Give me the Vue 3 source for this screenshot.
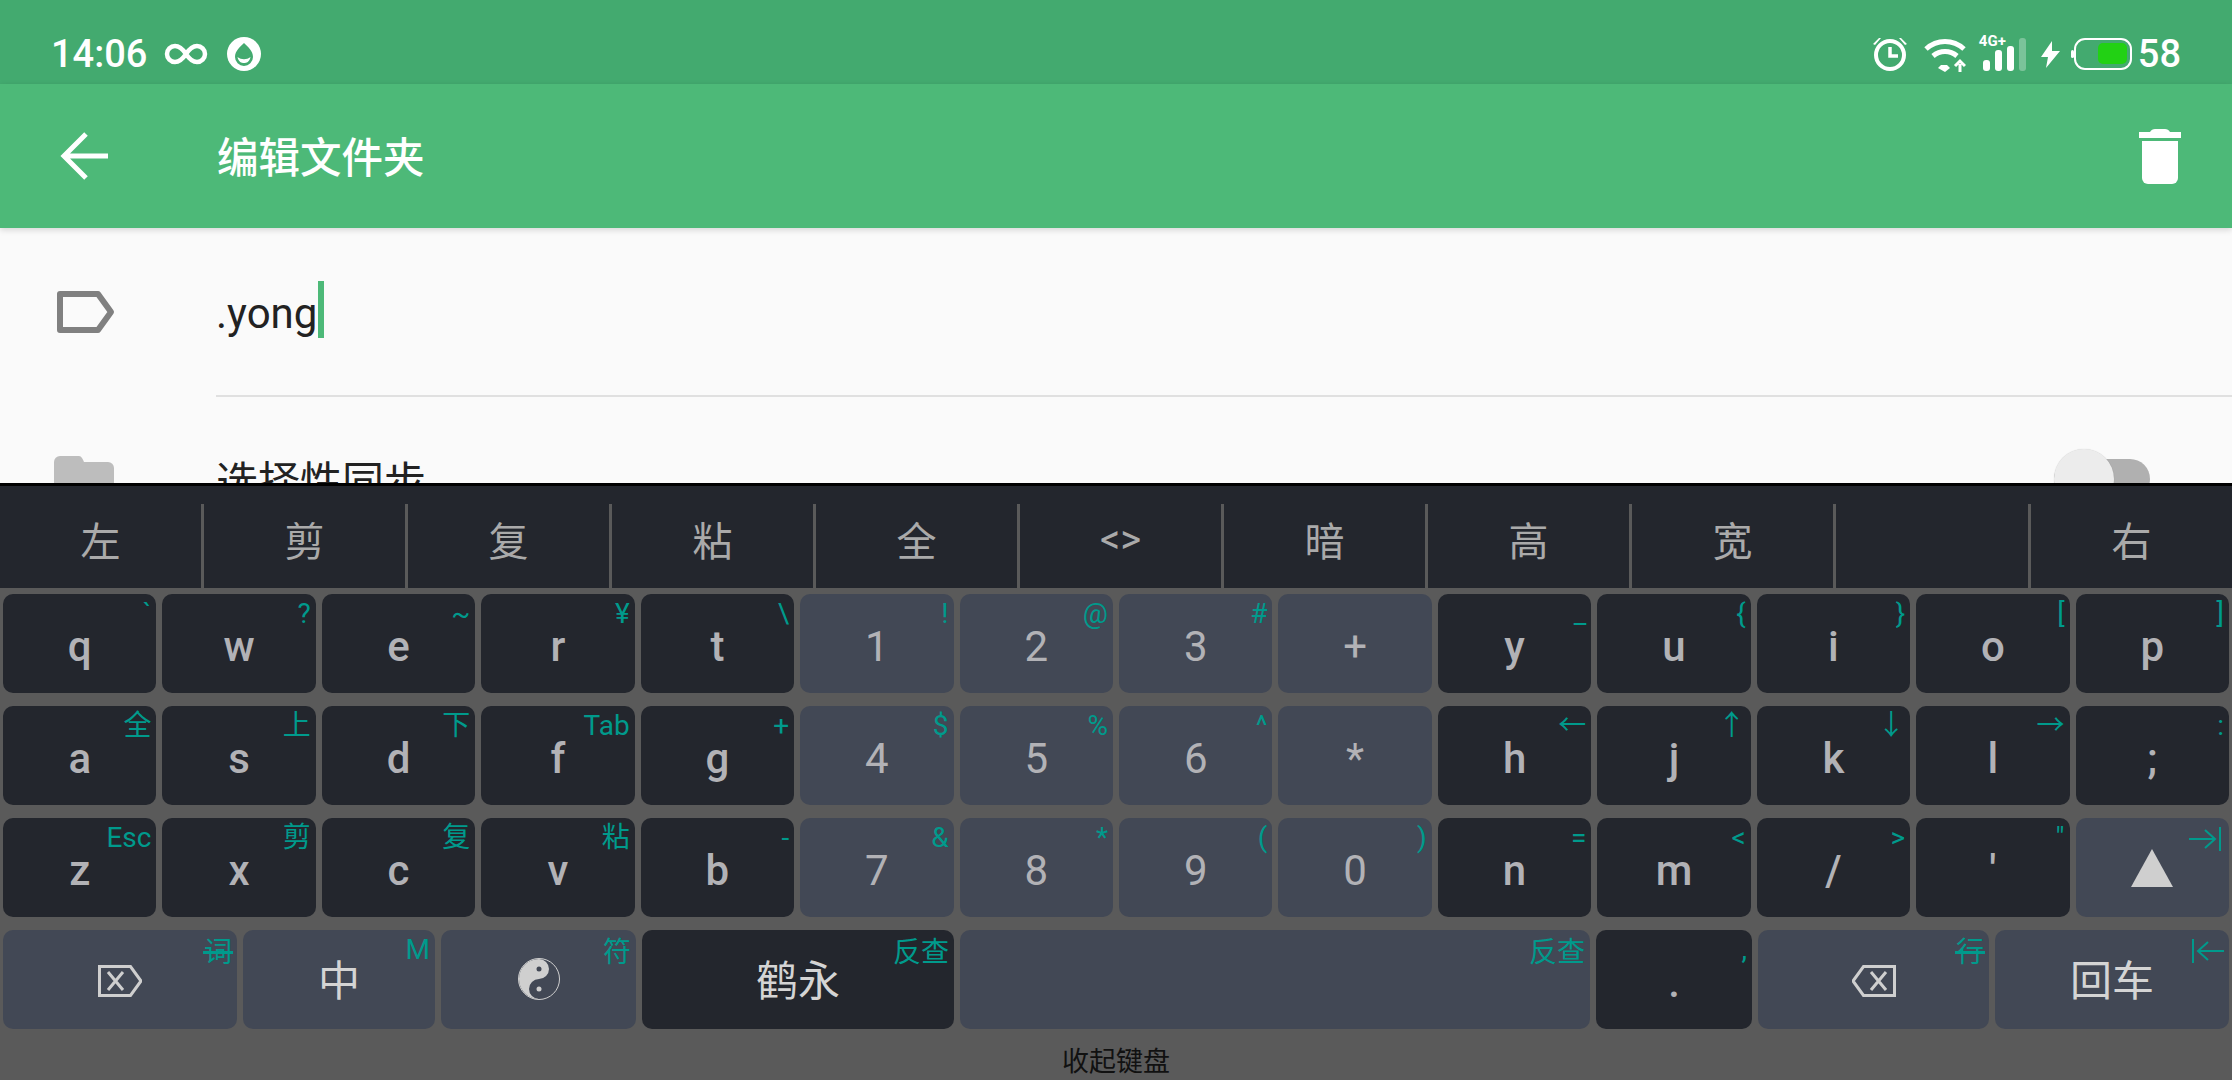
<!-- App.vue -->
<!-- Edit folder screen with a dark soft keyboard open over it. -->

<script setup>
const candidates = ['左', '剪', '复', '粘', '全', '<>', '暗', '高', '宽', '', '右']

function makeRow(labels, hints, liteFrom, liteTo) {
  return labels.map((label, i) => ({
    label,
    hint: hints[i],
    lite: i >= liteFrom && i <= liteTo,
  }))
}

const rows = [
  makeRow(
    ['q', 'w', 'e', 'r', 't', '1', '2', '3', '+', 'y', 'u', 'i', 'o', 'p'],
    ['`', '?', '~', '¥', '\\', '!', '@', '#', '', '_', '{', '}', '[', ']'],
    5, 8,
  ),
  makeRow(
    ['a', 's', 'd', 'f', 'g', '4', '5', '6', '*', 'h', 'j', 'k', 'l', ';'],
    ['全', '上', '下', 'Tab', '+', '$', '%', '^', '', '←', '↑', '↓', '→', ':'],
    5, 8,
  ),
  makeRow(
    ['z', 'x', 'c', 'v', 'b', '7', '8', '9', '0', 'n', 'm', '/', "'", ''],
    ['Esc', '剪', '复', '粘', '-', '&', '*', '(', ')', '=', '<', '>', '"', ''],
    5, 8,
  ),
]
rows[2][13].lite = true
rows[2][13].shift = true
</script>

<template>
  <div class="screen">
    <div class="status">
      <div class="status-left">
        <span class="status-text">14:06</span>
        <svg class="ic-inf" width="44" height="22" viewBox="0 0 44 22" fill="none" stroke="#fff" stroke-width="4.500">
          <path d="M22 11C18 5 15 3 11 3a8 8 0 0 0 0 16c4 0 7-2 11-8s7-8 11-8a8 8 0 0 1 0 16c-4 0-7-2-11-8z" />
        </svg>
        <svg class="ic-drop" width="34" height="34" viewBox="0 0 34 34">
          <circle cx="17" cy="17" r="17" fill="#fff" />
          <path d="M17 6c4 4 9 8 9 14a9 9 0 0 1-18 0c0-6 5-10 9-14z" fill="#43aa6f" />
          <path d="M10.500 20c4 3 9 3 13 0c-1 5-4 6-6.500 6s-5.500-1-6.500-6z" fill="#fff" />
        </svg>
      </div>
      <div class="status-right">
        <svg width="36" height="36" viewBox="0 0 36 36" fill="none" stroke="#fff">
          <circle cx="18" cy="19" r="14" stroke-width="4" />
          <path d="M18 11v9h8" stroke-width="3.500" />
          <path d="M1 8l6-6h2L3 9zM35 8l-6-6h-2l6 7z" fill="#fff" stroke="none" />
        </svg>
        <svg class="ic-wifi" width="42" height="34" viewBox="0 0 42 34" fill="none" stroke="#fff" stroke-width="5">
          <path d="M2 11c11-10 27-10 38 0" />
          <path d="M9 18c7-6 17-6 24 0" />
          <path d="M14 30l7 4 5-4-3-3h-6z" fill="#fff" stroke="none" />
          <path d="M36 34v-8M31 28l5-5 5 5" stroke-width="3" />
        </svg>
        <div class="signal">
          <span class="net">4G+</span>
          <svg width="46" height="33" viewBox="0 0 46 33">
            <rect x="0" y="22" width="7" height="11" rx="3" fill="#fff" />
            <rect x="12" y="12" width="7" height="21" rx="3" fill="#fff" />
            <rect x="24" y="8" width="7" height="25" rx="3" fill="#fff" />
            <rect x="36" y="0" width="7" height="33" rx="3" fill="#fff" opacity="0.3" />
          </svg>
        </div>
        <svg class="ic-bolt" width="19" height="27" viewBox="0 0 19 27">
          <path d="M11 0L0 16h7L5 27 19 10h-8z" fill="#fff" />
        </svg>
        <svg class="ic-batt" width="61" height="32" viewBox="0 0 61 32" fill="none">
          <rect x="4" y="1" width="56" height="30" rx="10" stroke="#fff" stroke-width="2" />
          <rect x="27" y="5" width="29" height="21" rx="5" fill="#22d114" />
          <rect x="0" y="12" width="3" height="8" rx="1.500" fill="#fff" />
        </svg>
        <span class="status-text">58</span>
      </div>
    </div>

    <div class="toolbar">
      <svg class="ic-back" width="48" height="48" viewBox="0 0 48 48" fill="none" stroke="#fff" stroke-width="5">
        <path d="M48 24H4M26 2L4 24l22 22" />
      </svg>
      <h1 class="title">编辑文件夹</h1>
      <svg class="ic-trash" width="42" height="55" viewBox="0 0 42 55" fill="#fff">
        <path d="M0 3h11c1-2 3-3 5-3h10c2 0 4 1 5 3h11v6H0z" />
        <path d="M3 12h36v37a6 6 0 0 1-6 6H9a6 6 0 0 1-6-6z" />
      </svg>
    </div>

    <div class="content">
      <div class="row row-name">
        <svg class="row-icon" width="60" height="44" viewBox="0 0 60 44" fill="none" stroke="#808080" stroke-width="6" stroke-linejoin="round">
          <path d="M4 4h38l13 18-13 18H4z" />
        </svg>
        <div class="field">
          <span class="field-text">.yong</span><span class="caret"></span>
        </div>
      </div>
      <div class="row row-sync">
        <svg class="row-icon" width="60" height="50" viewBox="0 0 60 50" fill="#bdbdbd">
          <path d="M6 0h18c3 0 4 1 6 6h24a6 6 0 0 1 6 6v38H0V6a6 6 0 0 1 6-6z" />
        </svg>
        <span class="sync-label">选择性同步</span>
        <div class="toggle"><span class="knob"></span></div>
      </div>
    </div>

    <div class="keyboard">
      <div class="candidates">
        <div v-for="(c, i) in candidates" :key="i" class="cand">
          <span :class="{ ascii: c === '<>' }">{{ c }}</span>
        </div>
      </div>

      <div class="keys">
        <div v-for="(row, r) in rows" :key="r" class="key-row">
          <div v-for="k in row" :key="k.label + k.hint" class="key" :class="{ lite: k.lite }">
            <span v-if="k.hint" class="hint">{{ k.hint }}</span>
            <svg v-if="k.shift" class="shift" width="42" height="38" viewBox="0 0 42 38">
              <path d="M21 0l21 38H0z" fill="#cfcfcf" />
            </svg>
            <span v-else class="label" :class="{ thin: k.lite }">{{ k.label }}</span>
          </div>
          <div v-if="r === 2" class="tab-hint">
            <svg width="32" height="24" viewBox="0 0 32 24" fill="none" stroke="#009a8c" stroke-width="2">
              <path d="M0 12h26M16 3l10 9-10 9M31 0v24" />
            </svg>
          </div>
        </div>

        <div class="key-row bottom">
          <div class="key lite">
            <span class="hint cjk strike">词</span>
            <svg class="del" width="44" height="32" viewBox="0 0 44 32" fill="none" stroke="#cfcfcf" stroke-width="3">
              <path d="M1.500 1.500h31L43 16 32.500 30.500h-31z" />
              <path d="M10 7l15 18M25 7L10 25" />
            </svg>
          </div>
          <div class="key lite">
            <span class="hint">M</span>
            <span class="label cjk">中</span>
          </div>
          <div class="key lite">
            <span class="hint cjk">符</span>
            <svg class="taiji" width="42" height="42" viewBox="0 0 42 42">
              <circle cx="21" cy="21" r="20.500" fill="none" stroke="#cfcfcf" stroke-width="1" />
              <path d="M21 1A20 20 0 0 0 21 41A10 10 0 0 1 21 21A10 10 0 0 0 21 1z" fill="#cfcfcf" />
              <circle cx="21" cy="11" r="2.500" fill="#424855" />
              <circle cx="21" cy="31" r="2.500" fill="#cfcfcf" />
            </svg>
          </div>
          <div class="key">
            <span class="hint cjk">反查</span>
            <span class="label cjk">鹤永</span>
          </div>
          <div class="key lite">
            <span class="hint cjk">反查</span>
          </div>
          <div class="key">
            <span class="hint">,</span>
            <span class="label">.</span>
          </div>
          <div class="key lite">
            <span class="hint cjk strike">行</span>
            <svg class="del" width="44" height="32" viewBox="0 0 44 32" fill="none" stroke="#cfcfcf" stroke-width="3">
              <path d="M42.500 1.500h-31L1 16l10.500 14.500h31z" />
              <path d="M19 7l15 18M34 7L19 25" />
            </svg>
          </div>
          <div class="key lite">
            <svg class="enter-hint" width="32" height="24" viewBox="0 0 32 24" fill="none" stroke="#009a8c" stroke-width="2">
              <path d="M32 12H6M16 3L6 12l10 9M1 0v24" />
            </svg>
            <span class="label cjk">回车</span>
          </div>
        </div>
      </div>

      <div class="collapse">收起键盘</div>
    </div>
  </div>
</template>

<style>
html, body { margin: 0; background: #5a5a5a; }
</style>

<style scoped>
.screen {
  width: 2232px;
  height: 1080px;
  overflow: hidden;
  display: flex;
  flex-direction: column;
  font-family: Roboto, "Noto Sans CJK SC", sans-serif;
}

.status {
  height: 84px;
  flex: none;
  background: #43aa6f;
  display: flex;
  justify-content: space-between;
  align-items: center;
  padding: 24px 51px 0 51px;
  box-sizing: border-box;
  color: #fff;
}
.status-left, .status-right { display: flex; align-items: center; }
.status-text { font-size: 38px; font-weight: 500; line-height: 38px; }
.ic-inf { margin-left: 17px; }
.ic-drop { margin-left: 19px; }
.ic-wifi { margin-left: 16px; margin-top: 1px; }
.signal { margin-left: 13px; position: relative; width: 46px; height: 33px; padding-left: 4px; }
.net {
  position: absolute;
  left: 0;
  top: -5px;
  font-size: 15px;
  line-height: 16px;
  font-weight: 700;
}
.ic-bolt { margin-left: 12px; }
.ic-batt { margin-left: 11px; margin-right: 6px; }

.toolbar {
  height: 144px;
  flex: none;
  background: #4db978;
  display: flex;
  align-items: center;
  padding: 0 51px 0 60px;
  box-sizing: border-box;
  box-shadow: 0 2px 6px rgba(0, 0, 0, 0.15);
  position: relative;
}
.ic-back { flex: none; }
.title {
  margin: -3px 0 0 109px;
  flex: 1;
  font-size: 41.500px;
  font-weight: 500;
  color: #fff;
  font-family: "Noto Sans CJK SC", sans-serif;
}
.ic-trash { flex: none; margin-top: 0; }

.content {
  height: 255px;
  flex: none;
  background: #fafafa;
  overflow: hidden;
}
.row { display: flex; align-items: center; }
.row-icon { flex: none; }
.row-name { height: 168px; padding-left: 56px; }
.field {
  margin-left: 100px;
  flex: 1;
  height: 169px;
  display: flex;
  align-items: center;
  border-bottom: 2px solid #e0e0e0;
  box-sizing: border-box;
  margin-top: 1px;
}
.field-text { font-size: 42px; color: #222; font-weight: 400; margin-top: 3px; }
.caret { width: 6px; height: 57px; background: #4db978; margin-left: 1px; margin-top: -4px; }
.row-sync { padding: 60px 82px 0 54px; height: 100px; align-items: flex-start; }
.sync-label {
  margin-left: 102px;
  flex: 1;
  font-size: 42px;
  line-height: 60px;
  color: #222;
  margin-top: -7px;
  font-family: "Noto Sans CJK SC", sans-serif;
}
.toggle {
  position: relative;
  width: 96px;
  height: 40px;
  border-radius: 20px;
  background: #b0b0b0;
  margin-top: 3px;
}
.knob {
  position: absolute;
  left: 0;
  top: -10px;
  width: 60px;
  height: 60px;
  border-radius: 50%;
  background: #ececec;
  box-shadow: 0 0 1px rgba(0, 0, 0, 0.2);
}

.keyboard {
  flex: 1;
  background: #5a5a5a;
  border-top: 3px solid #000;
  display: flex;
  flex-direction: column;
}
.candidates {
  height: 102px;
  flex: none;
  background: #23262d;
  display: grid;
  grid-template-columns: repeat(9, 204px) 195px 1fr;
}
.cand {
  margin-top: 18px;
  border-right: 3px solid #5a5a5a;
  display: flex;
  align-items: center;
  justify-content: center;
  color: #aaa;
  font-size: 40px;
  font-family: "Noto Sans CJK SC", sans-serif;
}
.cand span { margin-top: -14px; }
.cand:last-child { border-right: none; }
.ascii { font-family: Roboto, sans-serif; font-size: 40px; }

.keys {
  padding: 6px 3px 0;
  display: flex;
  flex-direction: column;
  gap: 13px;
}
.key-row {
  display: grid;
  grid-template-columns: repeat(14, 1fr);
  gap: 6px;
  height: 99px;
  position: relative;
}
.key-row.bottom {
  grid-template-columns: 234px 192px 195px 312px 630px 156px 231px 1fr;
}
.key {
  position: relative;
  background: #23262d;
  border-radius: 10px;
  display: flex;
  align-items: center;
  justify-content: center;
  padding-top: 6px;
  box-sizing: border-box;
  min-width: 0;
}
.key.lite { background: #424855; }
.label { font-size: 42px; color: #b2b2b6; font-weight: 500; line-height: 50px; }
.label.thin { font-weight: 400; }
.label.cjk {
  color: #d4d4d4;
  font-weight: 400;
  font-size: 42px;
  margin-top: -9px;
  font-family: "Noto Sans CJK SC", sans-serif;
}
.hint {
  position: absolute;
  top: 4px;
  right: 5px;
  font-size: 28px;
  line-height: 32px;
  color: #009a8c;
}
.hint.cjk { font-family: "Noto Sans CJK SC", sans-serif; }
.hint.strike::after {
  content: "";
  position: absolute;
  left: -1px;
  right: -1px;
  top: 17px;
  height: 3px;
  background: #009a8c;
}
.shift { margin-top: -6px; }
.tab-hint { position: absolute; right: 8px; top: 9px; line-height: 0; }
.enter-hint { position: absolute; top: 9px; right: 5px; }
.del { margin-top: -4px; }
.taiji { margin-top: -8px; }

.collapse {
  flex: 1;
  text-align: center;
  font-size: 27px;
  line-height: 62px;
  color: #111;
  font-family: "Noto Sans CJK SC", sans-serif;
}
</style>
